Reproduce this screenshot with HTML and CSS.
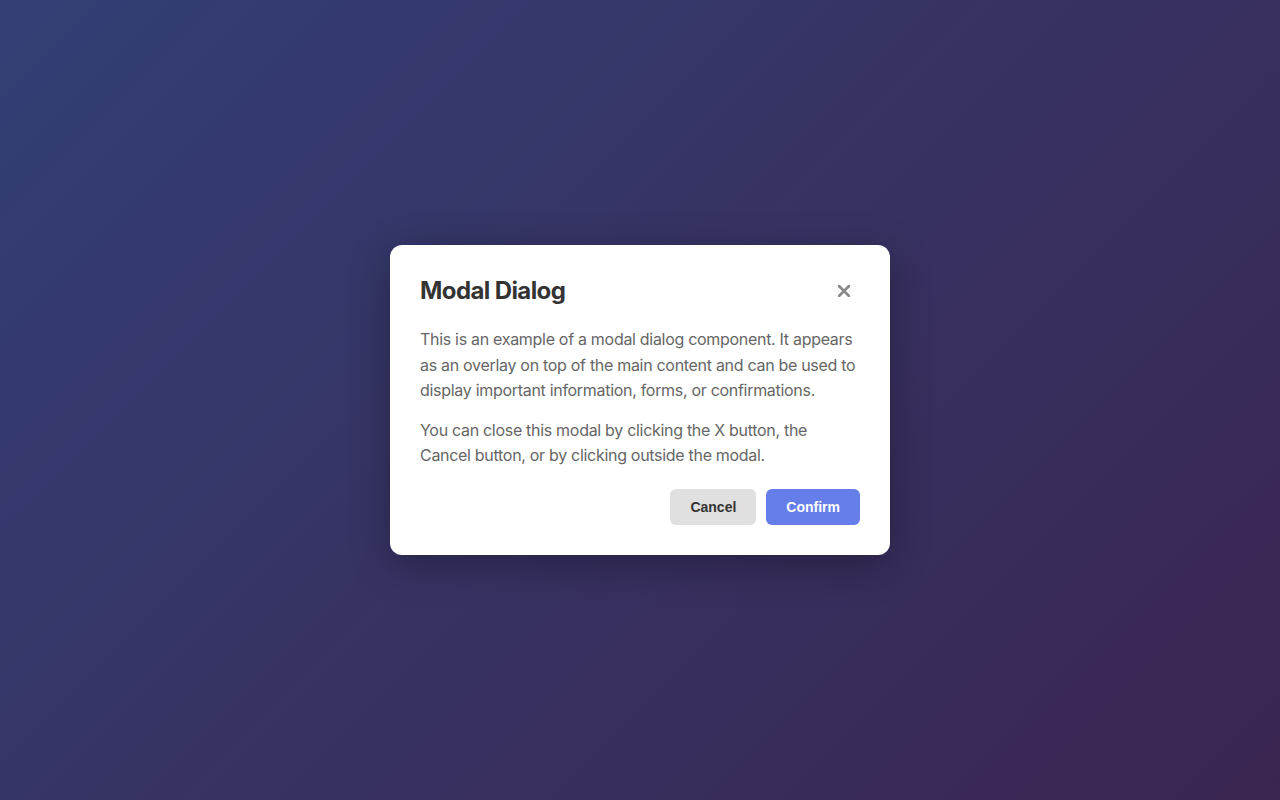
FILE: index.html
```html
<!DOCTYPE html>
<html lang="en">
<head>
<meta charset="utf-8">
<title>Modal Dialog</title>
<link rel="stylesheet" href="styles.css">
</head>
<body>
<div class="backdrop">
  <div class="overlay">
    <div class="modal">
      <div class="modal-header">
        <h2 class="modal-title">Modal Dialog</h2>
        <button class="close-btn" aria-label="Close">
          <svg width="12" height="12" viewBox="0 0 12 12"><path d="M1 1L11 11M11 1L1 11" stroke="#888" stroke-width="2.6" stroke-linecap="round"/></svg>
        </button>
      </div>
      <div class="modal-body">
        <p>This is an example of a modal dialog component. It appears as an overlay on top of the main content and can be used to display important information, forms, or confirmations.</p>
        <p>You can close this modal by clicking the X button, the Cancel button, or by clicking outside the modal.</p>
      </div>
      <div class="modal-footer">
        <button class="btn btn-cancel">Cancel</button>
        <button class="btn btn-confirm">Confirm</button>
      </div>
    </div>
  </div>
</div>
</body>
</html>
```
FILE: styles.css
```css
* { box-sizing: border-box; }
html, body { margin: 0; padding: 0; height: 100%; }
body {
  font-family: Inter, "Noto Sans", sans-serif;
}
.backdrop {
  height: 100%;
  background: linear-gradient(135deg, #667eea 0%, #764ba2 100%);
}
.overlay {
  height: 100%;
  background: rgba(0, 0, 0, 0.5);
  display: flex;
  align-items: center;
  justify-content: center;
}
.modal {
  width: 500px;
  background: #fff;
  border-radius: 12px;
  padding: 30px;
  box-shadow: 0 10px 40px rgba(0, 0, 0, 0.3);
}
.modal-header {
  display: flex;
  align-items: center;
  justify-content: space-between;
  margin-bottom: 20px;
}
.modal-title {
  margin: 0;
  font-size: 24px;
  font-weight: 700;
  color: #333;
  line-height: 1.2;
  letter-spacing: -0.6px;
}
.close-btn {
  background: none;
  border: none;
  padding: 0;
  width: 32px;
  height: 32px;
  display: flex;
  align-items: center;
  justify-content: center;
  cursor: pointer;
}
.modal-body {
  color: #666;
  font-size: 16px;
  line-height: 1.6;
  letter-spacing: -0.3px;
  margin-bottom: 20px;
}
.modal-body p { margin: 0; }
.modal-body p + p { margin-top: 14px; }
.modal-footer {
  display: flex;
  justify-content: flex-end;
  gap: 10px;
}
.btn {
  font-family: "Liberation Sans", Arial, sans-serif;
  font-size: 14px;
  font-weight: 700;
  line-height: 16px;
  padding: 10px 20px;
  border: none;
  border-radius: 6px;
  cursor: pointer;
}
.btn-cancel { background: #e0e0e0; color: #333; }
.btn-confirm { background: #667eea; color: #fff; }
```
